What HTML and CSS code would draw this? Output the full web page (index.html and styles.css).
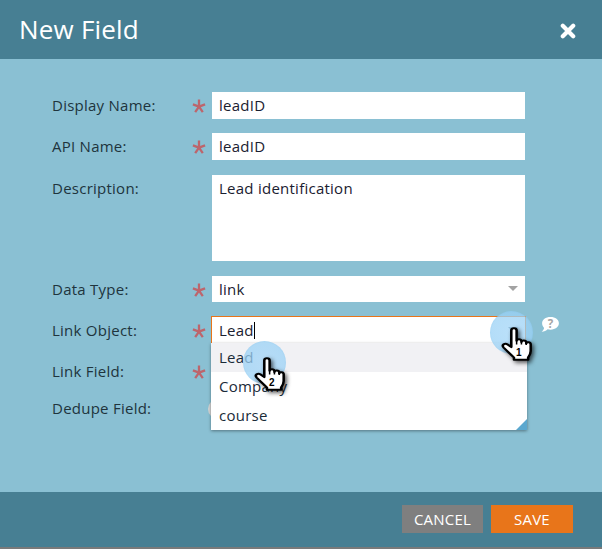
FILE: index.html
```html
<!DOCTYPE html>
<html lang="en">
<head>
<meta charset="utf-8">
<title>New Field</title>
<link rel="stylesheet" href="styles.css">
</head>
<body>
<svg class="defs" width="0" height="0" aria-hidden="true">
  <defs>
    <symbol id="star" viewBox="0 0 14 14">
      <path d="M7 .5v7.200M7 7.700.9 5.400M7 7.700l6.100-2.300M7 7.700 3.200 13.200M7 7.700l3.800 5.500" fill="none" stroke="#bd656c" stroke-width="2.300"/>
    </symbol>
    <symbol id="hand" viewBox="0 0 30 40" preserveAspectRatio="none">
      <path d="M10.500 4.500c0-3 4.200-3 4.200 0v10.200c0-2 3.600-2.200 3.800.2v1c.2-2 3.600-2 3.800.3v1.200c.3-1.800 3.400-1.600 3.500.8v6.800c0 3-1 4.600-2 6.500v2.200H12.600v-2.200c-2-2.600-5-6-8.200-10-1.800-2.400 1-5 3.200-3l2.900 2.600z" fill="#fff" stroke="#000" stroke-width="2" stroke-linejoin="round"/>
      <path d="M14.700 14.500v4M18.500 15.500v3M22.300 17v2" fill="none" stroke="#000" stroke-width="1.200"/>
    </symbol>
  </defs>
</svg>
<div class="dialog">
  <header class="head">
    <h1 class="title">New Field</h1>
    <svg class="close" width="16" height="16" viewBox="0 0 16 16" aria-label="Close"><path d="M2.800 2.800l10.400 10.400M13.200 2.800 2.800 13.200" stroke="#fff" stroke-width="4.200" stroke-linecap="round"/></svg>
  </header>
  <main class="form">
    <div class="row">
      <span class="label">Display Name:</span><svg class="req"><use href="#star"/></svg>
      <div class="field">leadID</div>
    </div>
    <div class="row">
      <span class="label">API Name:</span><svg class="req"><use href="#star"/></svg>
      <div class="field">leadID</div>
    </div>
    <div class="row">
      <span class="label">Description:</span><span class="req"></span>
      <div class="field area">Lead identification</div>
    </div>
    <div class="row">
      <span class="label">Data Type:</span><svg class="req"><use href="#star"/></svg>
      <div class="field select">link<i class="caret"></i></div>
    </div>
    <div class="row">
      <span class="label">Link Object:</span><svg class="req"><use href="#star"/></svg>
      <div class="combo">
        <div class="field focus"><span>Lead</span><i class="text-cursor"></i><i class="caret caret-dark"></i></div>
        <ul class="menu">
          <li class="item active">Lead</li>
          <li class="item">Company</li>
          <li class="item">course</li>
          <li class="grip"></li>
        </ul>
        <div class="tip"><svg width="23" height="22" viewBox="0 0 20 18"><path d="M10 1.200c4.300 0 7.300 2.300 7.300 5.500s-3 5.500-7.300 5.500c-.9 0-1.700-.1-2.500-.3-1.200 1.200-2.900 2-5.300 2.200 1.300-1 2-2.100 2.200-3.400C3.300 9.600 2.700 8.300 2.700 6.700c0-3.200 3-5.500 7.300-5.500z" fill="#fff"/><text x="10" y="10.500" class="tip-q">?</text></svg></div>
      </div>
    </div>
    <div class="row">
      <span class="label">Link Field:</span><svg class="req"><use href="#star"/></svg>
    </div>
    <div class="row dedupe">
      <span class="label">Dedupe Field:</span><span class="req"></span>
      <i class="toggle"></i>
    </div>
  </main>
  <footer class="foot">
    <button class="btn cancel" type="button">CANCEL</button>
    <button class="btn save" type="button">SAVE</button>
  </footer>
</div>
<div class="pointer p1"><i class="halo"></i><svg class="handsvg"><use href="#hand"/></svg><b class="num">1</b></div>
<div class="pointer p2"><i class="halo"></i><svg class="handsvg"><use href="#hand"/></svg><b class="num">2</b></div>
</body>
</html>
```
FILE: styles.css
```css
* { box-sizing: border-box; }
html, body { margin: 0; padding: 0; }
body {
  width: 602px;
  height: 549px;
  background: #7a7a7a;
  overflow: hidden;
  position: relative;
  font-family: "Open Sans", sans-serif;
  font-size: 15px;
  letter-spacing: .25px;
  color: #1c2b33;
}
.defs { position: absolute; }
.dialog { display: flex; flex-direction: column; height: 547px; background: #8ac0d3; }
.head {
  height: 59px;
  flex: none;
  background: #477f93;
  display: flex;
  align-items: center;
  justify-content: space-between;
  padding: 0 26px 0 19px;
}
.title { margin: 0; font-size: 26px; font-weight: 400; letter-spacing: .2px; color: #fff; line-height: 59px; }
.close { display: block; margin-top: 2px; }
.form { flex: 1; padding: 33px 0 0 52px; display: flex; flex-direction: column; gap: 15px; }
.row { display: flex; align-items: flex-start; height: 26px; }
.row:first-child, .row:nth-child(2) { height: 27px; }
.row:nth-child(1) { margin-bottom: -1px; }
.row:nth-child(3) { height: 86px; }
.label { width: 140px; line-height: 26px; flex: none; color: #20343d; }
.req { width: 14px; height: 14px; margin: 7px 6px 0 0; flex: none; display: block; }
.field {
  width: 313px;
  height: 100%;
  background: #fff;
  padding-left: 7px;
  line-height: 27px;
  color: #1a2030;
  position: relative;
}
.area { line-height: 27px; }
.caret {
  position: absolute;
  right: 7px;
  top: 10px;
  width: 0;
  height: 0;
  border-left: 5px solid transparent;
  border-right: 5px solid transparent;
  border-top: 5px solid #a3a3a3;
}
.caret-dark { border-top-color: #6f8791; top: 10px; right: 7px; }
.combo { position: relative; width: 313px; height: 26px; }
.focus {
  width: 315px;
  height: 27px;
  margin: -1px 0 0 -1px;
  border: 1px solid #e8751a;
  border-bottom: 0;
  padding-left: 7px;
  line-height: 27px;
  display: flex;
}
.text-cursor { width: 1px; height: 17px; background: #000; margin: 5px 0 0 0; }
.menu {
  position: absolute;
  z-index: 2;
  left: -1px;
  top: 26px;
  width: 316px;
  height: 87px;
  margin: 0;
  padding: 0;
  list-style: none;
  background: #fff;
  box-shadow: 0 1px 3px rgba(0, 0, 0, .4);
}
.item { height: 29px; line-height: 29px; padding-left: 8px; color: #1a2b38; }
.active { background: #f1f1f4; }
.grip {
  position: absolute;
  right: 0;
  bottom: 0;
  width: 0;
  height: 0;
  border-left: 11px solid transparent;
  border-bottom: 11px solid #5ba8cf;
}
.tip { position: absolute; left: 327px; top: -2px; width: 23px; height: 22px; }
.tip svg { display: block; }
.tip-q { font: 700 10px "Open Sans", sans-serif; fill: #a5a5a5; text-anchor: middle; letter-spacing: 0; }
.dedupe { margin-top: -4px; }
.toggle {
  width: 20px;
  height: 20px;
  border-radius: 50%;
  background: #d6d6d6;
  margin: 4px 0 0 -4px;
}
.foot {
  height: 55px;
  flex: none;
  background: #477f93;
  display: flex;
  justify-content: flex-end;
  gap: 8px;
  padding: 13px 29px 0 0;
}
.btn {
  height: 28px;
  border: 0;
  padding: 0;
  color: #fff;
  font: 400 15px "Open Sans", sans-serif;
  letter-spacing: .2px;
  text-align: center;
}
.cancel { width: 81px; background: #7f7f7f; }
.save { width: 82px; background: #e8751a; }
.pointer { position: absolute; width: 43px; height: 43px; z-index: 5; }
.p1 { left: 490px; top: 311px; }
.p2 { left: 243px; top: 341px; }
.halo {
  position: absolute;
  inset: 0;
  border-radius: 50%;
  background: radial-gradient(circle, rgba(160, 212, 248, .72) 0, rgba(155, 210, 246, .75) 65%, rgba(95, 172, 222, .8) 100%);
}
.handsvg {
  position: absolute;
  left: 8px;
  top: 15px;
  width: 38px;
  height: 40px;
  filter: drop-shadow(2px 2px 2px rgba(0, 0, 0, .65));
}
.num {
  position: absolute;
  left: 26px;
  top: 37px;
  font: 700 10px/10px "Liberation Sans", sans-serif;
  letter-spacing: 0;
  color: #000;
}
```
